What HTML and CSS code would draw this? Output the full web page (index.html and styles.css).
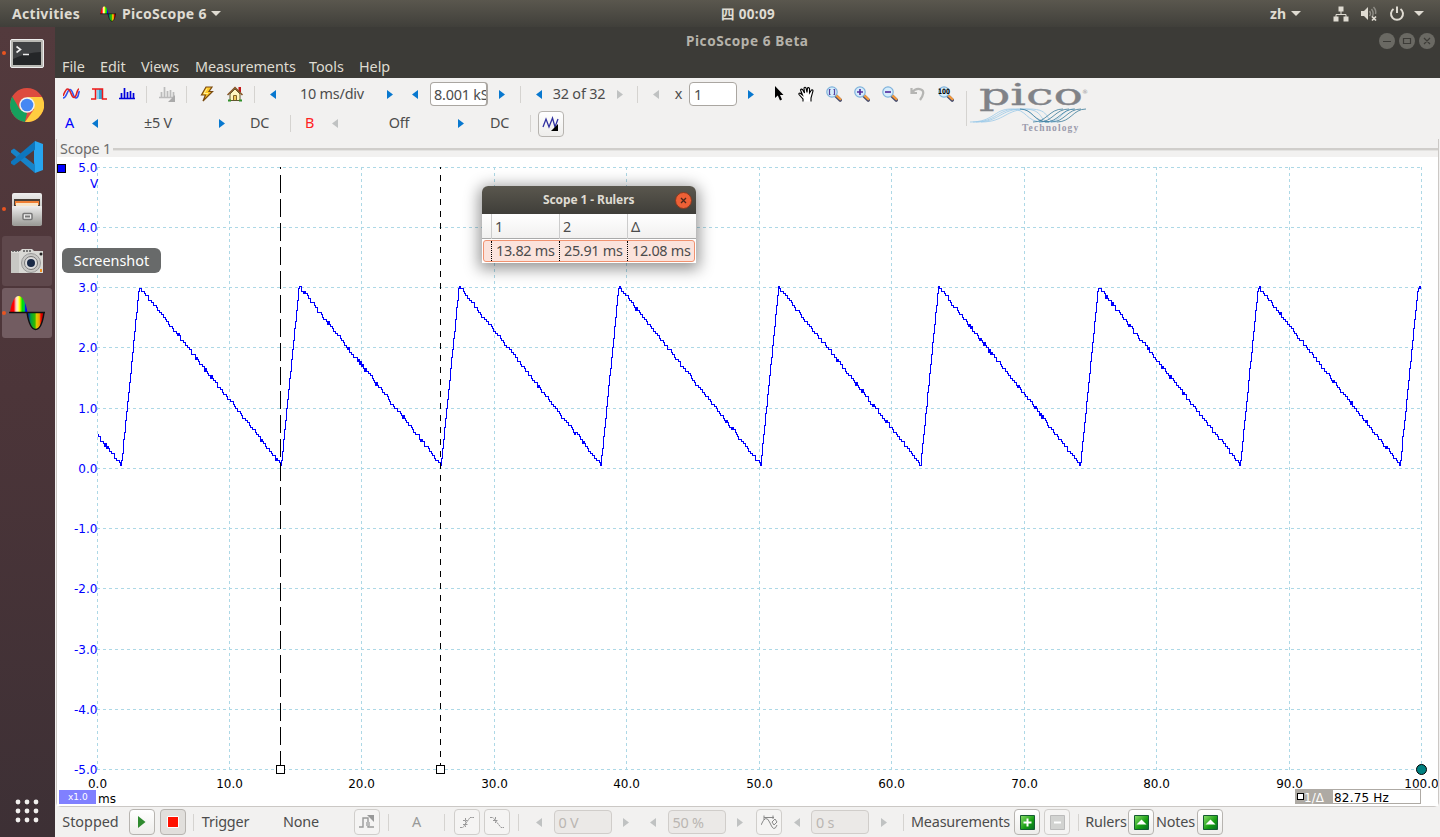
FILE: index.html
```html
<!DOCTYPE html>
<html lang="en">
<head>
<meta charset="utf-8">
<title>PicoScope 6 Beta</title>
<link rel="stylesheet" href="styles.css">
</head>
<body>
<svg class="defs" width="0" height="0">
  <symbol id="left" viewBox="0 0 6 9"><path d="M6 0V9L0 4.5Z" fill="currentColor"/></symbol>
  <symbol id="right" viewBox="0 0 6 9"><path d="M0 0V9L6 4.5Z" fill="currentColor"/></symbol>
  <symbol id="lens" viewBox="0 0 16 16">
    <path d="M9.5 9.5L14.2 14" stroke="#4a5070" stroke-width="3.6" stroke-linecap="round"/>
    <path d="M10.5 9.6L14.4 13.2" stroke="#f59a3c" stroke-width="2.2" stroke-linecap="round"/>
    <circle cx="6" cy="6" r="5.2" fill="#d6edfb" stroke="#7fb2dc" stroke-width="1.2"/>
  </symbol>
  <symbol id="spectrum" viewBox="0 0 16 12"><path d="M0 10.5H16M2.5 10V5M5.5 10V0M8.500 10V4M11.500 10V3M14.500 10V5" stroke="currentColor" stroke-width="1.700" fill="none"/></symbol>
  <linearGradient id="rainbow"><stop offset="0" stop-color="#e00"/><stop offset=".22" stop-color="#f00"/><stop offset=".34" stop-color="#fcc"/><stop offset=".45" stop-color="#ffa"/><stop offset=".55" stop-color="#ff0"/><stop offset=".7" stop-color="#0d0"/><stop offset=".82" stop-color="#0c4"/><stop offset=".9" stop-color="#00f"/></linearGradient>
  <linearGradient id="rainbow2"><stop offset="0" stop-color="#00c"/><stop offset=".2" stop-color="#00a040"/><stop offset=".45" stop-color="#3b0"/><stop offset=".55" stop-color="#dc0"/><stop offset=".72" stop-color="#e90"/><stop offset=".82" stop-color="#e00"/><stop offset="1" stop-color="#a00"/></linearGradient>
  <symbol id="pico" viewBox="0 0 36 36"><path d="M1 17.5C4 -4.500 15 -4.500 18.500 17.500Z" fill="url(#rainbow)"/><path d="M18.500 17.500C21 40 32 40 35 17.500Z" fill="url(#rainbow2)"/><path d="M0 17.500H36M18 17.500C21.500 40 32 40 35 17.500" fill="none" stroke="#111" stroke-width="1.500"/></symbol>
  <linearGradient id="green" x2="1" y2="1"><stop offset="0" stop-color="#8cdf6a"/><stop offset=".6" stop-color="#129b10"/><stop offset="1" stop-color="#086c28"/></linearGradient>
  <linearGradient id="metal" x2="0" y2="1"><stop offset="0" stop-color="#eee"/><stop offset="1" stop-color="#9c9c98"/></linearGradient>
</svg>

<header class="topbar">
  <span class="activities">Activities</span>
  <svg class="app-icon" width="16" height="16"><use href="#pico"/></svg>
  <span class="app-name">PicoScope 6</span><i class="caret"></i>
  <span class="clock">四 00:09</span>
  <div class="tray">
    <span class="lang">zh</span><i class="caret"></i>
    <svg class="net" width="16" height="16" fill="#dfdbd2"><path d="M5.500 0.500h5v5h-5zM0.500 10.500h5v5h-5zM10.500 10.500h5v5h-5z"/><path d="M8 5v3.500M3 11V8.500H13V11" fill="none" stroke="#dfdbd2"/></svg>
    <svg class="vol" width="18" height="16"><path d="M1 5h3l4-4v13l-4-4H1z" fill="#dfdbd2"/><path d="M9.500 5q2 2.500 0 5M11.500 3q3 4 0.500 8M13.500 1q3 3 2 7" fill="none" stroke="#8d8b84" stroke-width="1.500"/><path d="M12 10.500l4 4m0-4l-4 4" stroke="#dfdbd2" stroke-width="1.700"/></svg>
    <svg class="power" width="16" height="16" fill="none" stroke="#dfdbd2" stroke-width="2"><path d="M4.500 3A6 6 0 1 0 11.500 3M8 0.500V7"/></svg>
    <i class="caret"></i>
  </div>
</header>

<div class="desktop">
<nav class="dock">
  <div class="dock-item running"><svg width="34" height="29"><rect x=".5" y=".5" width="33" height="28" rx="1.500" fill="#babab5" stroke="#eee"/><rect x="3" y="3" width="28" height="23" fill="#242628"/><path d="M3 3H31V13Q18 13 3 20Z" fill="#404244"/><path d="M6.500 7.500l4 3-4 3M13 15.500h6" stroke="#eee" stroke-width="1.600" fill="none"/></svg></div>
  <div class="dock-item"><svg width="34" height="34" viewBox="0 0 34 34"><circle cx="17" cy="17" r="17" fill="#dd4b3e"/><path d="M2.300 8.500L9.600 21.200 17 25 15 33.900A17 17 0 0 1 2.300 8.500Z" fill="#16a05d"/><path d="M17 9H32A17 17 0 0 1 15 33.900L24.200 21Z" fill="#ffcd40"/><circle cx="17" cy="17" r="7.800" fill="#f3f3f0"/><circle cx="17" cy="17" r="6.300" fill="#4587f3"/></svg></div>
  <div class="dock-item"><svg width="32" height="32" viewBox="0 0 32 32"><path d="M24 0L32 3V29L24 32 23 20V10Z" fill="#27a5ef"/><path d="M0 9.500L3 7.500 24 24V32L0 11.500Z" fill="#1683c9"/><path d="M0 20.500L24 0V8.500L3 24.500 0 22.500Z" fill="#0e76bd"/></svg></div>
  <div class="dock-item running"><svg width="32" height="33"><rect x="1" y="0" width="30" height="33" rx="2" fill="url(#metal)"/><rect x="3" y="6" width="26" height="8" fill="#4a4038"/><path d="M4 8H28V12H4z" fill="#ef7f35"/><path d="M5 10H27V14H5z" fill="#f8e5c8"/><rect x="1" y="13" width="30" height="19" rx="1" fill="url(#metal)"/><rect x="12" y="20.500" width="9" height="6" rx="1" fill="#eee" stroke="#777" stroke-width="1.500"/><path d="M14 23.500h5" stroke="#777" stroke-width="2"/></svg></div>
  <div class="dock-item open"><svg width="34" height="25"><path d="M1 2H10L12 0H22L24 2H33V24H1z" fill="#d9d9d5"/><path d="M1 4H9V24H1z" fill="#c8c8c4"/><path d="M2 2h7M13 2h9" stroke="#555" stroke-width="1.500" stroke-dasharray="2 1"/><circle cx="21" cy="14" r="9.500" fill="#c8c8c5" stroke="#999"/><circle cx="21" cy="14" r="6.500" fill="#ddd" stroke="#777"/><circle cx="21" cy="14" r="4" fill="#1a2a46"/><circle cx="31" cy="5" r="1.500" fill="#222"/><path d="M30 20h2v3h-2z" fill="#f09020"/></svg></div>
  <div class="dock-item running focused"><svg width="36" height="36"><use href="#pico"/></svg></div>
  <svg class="apps-grid" width="24" height="24" fill="#f2f0ee"><circle cx="3" cy="3" r="2.400"/><circle cx="12" cy="3" r="2.400"/><circle cx="21" cy="3" r="2.400"/><circle cx="3" cy="12" r="2.400"/><circle cx="12" cy="12" r="2.400"/><circle cx="21" cy="12" r="2.400"/><circle cx="3" cy="21" r="2.400"/><circle cx="12" cy="21" r="2.400"/><circle cx="21" cy="21" r="2.400"/></svg>
</nav>

<main class="window">
  <div class="titlebar"><span>PicoScope 6 Beta</span>
    <svg class="win-buttons" width="56" height="16"><g fill="#6a6963"><circle cx="8" cy="8" r="8"/><circle cx="28" cy="8" r="8"/><circle cx="48" cy="8" r="8"/></g><path d="M4 8.500h8M24.500 5.500h7v5h-7zM45 5l6 6m0-6l-6 6" fill="none" stroke="#3c3b37" stroke-width="1.200"/></svg>
  </div>
  <div class="menubar"><span>File</span><span>Edit</span><span>Views</span><span>Measurements</span><span>Tools</span><span>Help</span></div>

  <div class="toolbar">
    <div class="tool-rows">
      <div class="row main-tools">
        <svg width="17" height="12" fill="none" stroke-width="1.600"><path d="M0 10C4 10 4 1.500 7 1.500S10 10 13 10 15 5 16.500 3" stroke="#3050f0"/><path d="M0 8C2 3 3 1 4.500 1 8 1 8 9.500 11 9.500S13.500 1 16 1" stroke="#e02020"/></svg>
        <svg width="16" height="12"><path d="M5.500 1H11V11H5.500z" fill="#8bd0ef"/><path d="M8 1H11V11H8z" fill="#38a0cf"/><path d="M0 11H4.500V1H11.500V11H16M1 1H5" fill="none" stroke="#f01818" stroke-width="1.500"/></svg>
        <svg class="navy" width="16" height="12"><use href="#spectrum"/></svg>
        <i class="sep"></i>
        <svg class="off" width="17" height="16" viewBox="0 0 17 16"><use href="#spectrum" width="16" height="12" y="1"/><path d="M16 9V16H9z" fill="#aaa"/></svg>
        <i class="sep"></i>
        <svg width="14" height="16"><path d="M6 1H12L9 5.500H12.500L3 15 5.500 9H1.500Z" fill="#ffc928" stroke="#7a4a10" stroke-width="1.200"/><path d="M7 2.500L4 7.500H8" fill="none" stroke="#fff29a"/></svg>
        <svg width="16" height="16"><path d="M11.500 1h2.500v5h-2.500z" fill="#c41818"/><path d="M3 8V14.500H13V8L8 3z" fill="#fff5c2" stroke="#61572e"/><path d="M0.500 9L8 1.500 15.500 9" fill="none" stroke="#805020" stroke-width="1.500"/><path d="M6.500 14V9.500H9.500V14" fill="#f2c95c" stroke="#80632b"/><path d="M1 14.500h3m8 0h3" stroke="#30902a" stroke-width="2"/></svg>
        <i class="sep"></i>
        <svg class="arr"><use href="#left"/></svg><span class="t-div">10 ms/div</span><svg class="arr"><use href="#right"/></svg>
        <svg class="arr"><use href="#left"/></svg><span class="field samples">8.001 kS</span><svg class="arr"><use href="#right"/></svg>
        <i class="sep"></i>
        <svg class="arr"><use href="#left"/></svg><span>32 of 32</span><svg class="arr dim"><use href="#right"/></svg>
        <i class="sep"></i>
        <svg class="arr dim"><use href="#left"/></svg><span>x</span><span class="field zoomf">1</span><svg class="arr"><use href="#right"/></svg>
        <svg width="10" height="16"><path d="M1 0V12L3.800 9.500 6 14.500 8 13.600 6 9H9.500Z"/></svg>
        <svg width="17" height="17"><path d="M5 15.500V13L1 8.500Q0.500 7 2 7L4.500 9 2.500 4Q3 2.500 4.500 3.500L6.500 7 6 2Q7 .5 8 2L9 6.500 9.500 2Q10.500 1 11.500 2.500V7L13.500 4Q15 3.500 15 5L13 12V15.500" fill="#fff" stroke="#000" stroke-width="1.100"/></svg>
        <svg width="16" height="16"><use href="#lens"/><path d="M4.500 3.500H3.500V8.500H4.500M7.500 3.500H8.500V8.500H7.500" fill="none" stroke="#5745a0" stroke-width="1.200"/></svg>
        <svg width="16" height="16"><use href="#lens"/><path d="M3 6H9M6 3V9" stroke="#5730a0" stroke-width="1.700"/></svg>
        <svg width="16" height="16"><use href="#lens"/><path d="M3 6H9" stroke="#5730a0" stroke-width="1.700"/></svg>
        <svg width="16" height="16"><path d="M1.500 2V7H7M2 6.500Q6 1.500 11 3.500T10 14" fill="none" stroke="#b5b5b3" stroke-width="2.200"/></svg>
        <svg width="16" height="16"><use href="#lens"/><text x="0" y="8" class="hundred" textLength="12" lengthAdjust="spacingAndGlyphs">100</text></svg>
      </div>
      <div class="row channel-tools">
        <span class="ch-a">A</span><svg class="arr"><use href="#left"/></svg><span>±5 V</span><svg class="arr"><use href="#right"/></svg><span>DC</span>
        <i class="sep"></i>
        <span class="ch-b">B</span><svg class="arr dim"><use href="#left"/></svg><span>Off</span><svg class="arr"><use href="#right"/></svg><span>DC</span>
        <i class="sep"></i>
        <span class="btn"><svg width="18" height="16"><path d="M1 11L4 3 7 11 10.500 2 13 11 16 3" fill="none" stroke="#3030a0" stroke-width="1.300"/><path d="M16 8V15H9z"/></svg></span>
      </div>
    </div>
    <i class="sep tall"></i>
    <svg class="logo" width="116" height="56">
      <text x="6" y="25" class="logo-pico" textLength="104" lengthAdjust="spacingAndGlyphs">pico</text>
      <text x="109" y="14" class="logo-r">®</text>
      <g fill="none" stroke-width=".8" transform="translate(0 1)"><g stroke="#9bc9e8"><path d="M0 41C24 41 24 28 44 28S58 41 74 41 88 28 101 28"/><path d="M-3 41C21 41 21 28 38 28S52 41 70 41"/><path d="M3 41C27 41 27 28 50 28S64 41 78 41"/><path d="M8 41C32 41 32 28 56 28S70 41 84 41"/></g><g stroke="#397a99"><path d="M60 41C74 41 76 28 90 28"/><path d="M66 41C80 41 82 28 96 28"/><path d="M72 41C86 41 88 28 102 28"/><path d="M78 41C92 41 94 28 108 28"/><path d="M84 41C98 41 100 28 113 28"/><path d="M47 28C60 28 60 41 76 41"/></g></g>
      <text x="49" y="51" class="logo-tech" textLength="56">Technology</text>
    </svg>
  </div>

  <section class="scope">
    <div class="scope-title"><span>Scope 1</span></div>
    <svg class="chart" id="chart" viewBox="57 157 1381 649" width="1381" height="649">
      <g id="grid"></g>
      <rect x="57.500" y="164.500" width="8" height="8" fill="#00f" stroke="#000"/>
      <g id="labels"></g>
      <text x="90" y="188" class="volt">V</text>
      <path id="wave" class="wave"/>
      <path d="M280.500 167V169M280.500 175V765" class="ruler long"/>
      <path d="M440.500 167V169M440.500 175V765" class="ruler short"/>
      <rect x="276.500" y="765.500" width="8" height="8" class="handle"/><rect x="436.500" y="765.500" width="8" height="8" class="handle"/>
      <circle cx="1421.500" cy="769.500" r="5" fill="#008080" stroke="#000"/>
      <rect x="59" y="790" width="37" height="14" fill="#8080ff"/><text x="68" y="800" class="mult">x1.0</text><text x="98" y="803" class="tick">ms</text>
      <rect x="1295.500" y="789.500" width="125" height="14" fill="#fff" stroke="#aeaaa4"/><path d="M1295 789h38v15h-38z" fill="#aeaaa4"/>
      <rect x="1297.500" y="793.500" width="6" height="6" fill="#fff" stroke="#000"/><text x="1304" y="802" class="inv">1/Δ</text><text x="1334" y="802" class="tick hz">82.75 Hz</text>
    </svg>
  </section>

  <footer class="statusbar">
    <span class="t-stop">Stopped</span>
    <span class="btn"><svg width="8" height="12"><path d="M0 0V12L7.500 6Z" fill="#2f8a2f"/></svg></span>
    <span class="btn pressed"><svg width="12" height="12"><path d="M0.500 .5h11v11h-11z" fill="#f10" stroke="#fff"/></svg></span>
    <i class="sep"></i><span>Trigger</span><span>None</span>
    <span class="btn off"><svg width="18" height="16"><path d="M1 13H5V4H10V13H16" fill="none" stroke="#999" stroke-width="1.400"/><path d="M9 1H16V8z" fill="#999"/><path d="M8 8h4v4h-4z" fill="#bbb"/></svg></span>
    <i class="sep"></i><span class="grey-a">A</span><i class="sep"></i>
    <span class="btn off"><svg width="16" height="14" fill="none" stroke="#999"><path d="M1 12.500H4L11 2.500H15M4 5.500H9M6.500 3V12M4 9.500H9" stroke-dasharray="2 .5"/></svg></span>
    <span class="btn off"><svg width="16" height="14" fill="none" stroke="#999"><path d="M1 2.500H4L12 12.500H15M4 5.500H9M6.500 2V8" stroke-dasharray="2 .5"/></svg></span>
    <i class="sep"></i>
    <svg class="arr dim"><use href="#left"/></svg><span class="field disabled">0 V</span><svg class="arr dim"><use href="#right"/></svg>
    <svg class="arr dim"><use href="#left"/></svg><span class="field disabled">50 %</span><svg class="arr dim"><use href="#right"/></svg>
    <span class="btn off"><svg width="17" height="15" fill="none" stroke="#888"><path d="M0 10Q5 -2 9 8T16 10M3 2.500H13M3 .5V5M12 .5V4M11 7l3-3 2 3-3 3z"/></svg></span>
    <svg class="arr dim"><use href="#left"/></svg><span class="field disabled">0 s</span><svg class="arr dim"><use href="#right"/></svg>
    <i class="sep"></i><span class="t-meas">Measurements</span>
    <span class="btn"><svg width="15" height="15"><path d="M.5 .5h14v14H.5z" fill="url(#green)" stroke="#145b32"/><path d="M3.500 7.500h8M7.500 3.500v8" stroke="#fff" stroke-width="2"/></svg></span>
    <span class="btn off"><svg width="15" height="15"><path d="M.5 .5h14v14H.5z" fill="#d2d3d1" stroke="#bbb"/><path d="M4 7.500h7" stroke="#fff" stroke-width="2"/></svg></span>
    <i class="sep"></i><span>Rulers</span>
    <span class="btn"><svg width="15" height="15"><path d="M.5 .5h14v14H.5z" fill="url(#green)" stroke="#145b32"/><path d="M2.500 9.500h10l-5-5z" fill="#fff"/></svg></span>
    <span>Notes</span>
    <span class="btn"><svg width="15" height="15"><path d="M.5 .5h14v14H.5z" fill="url(#green)" stroke="#145b32"/><path d="M2.500 9.500h10l-5-5z" fill="#fff"/></svg></span>
  </footer>
</main>
</div>

<div class="tooltip">Screenshot</div>
<div class="dialog">
  <div class="dialog-title"><span>Scope 1 - Rulers</span><svg width="17" height="17"><circle cx="8.500" cy="8.500" r="8" fill="#ee6036" stroke="#87391f"/><path d="M6 6l5 5m0-5l-5 5" stroke="#4a261a" stroke-width="1.300"/></svg></div>
  <div class="dialog-row head"><i></i><span>1</span><span>2</span><span>Δ</span></div>
  <div class="dialog-row values"><i></i><span>13.82 ms</span><span>25.91 ms</span><span>12.08 ms</span></div>
</div>
<script src="chart.js"></script>
</body>
</html>
```
FILE: styles.css
```css
* { box-sizing: border-box; }
body { margin: 0; width: 1440px; height: 837px; overflow: hidden; background: #f2f1f0; color: #4c4c4c; font: 14.4px/20px "Noto Sans", "Noto Sans CJK SC", sans-serif; white-space: nowrap; letter-spacing: -.2px; }
svg { display: block; flex: none; }
.defs { position: absolute; }

.topbar { height: 27px; display: flex; align-items: center; padding-left: 12px; background: linear-gradient(#5a574e, #403f3a); color: #dfdbd2; font-weight: bold; font-size: 14px; letter-spacing: .3px; }
.activities { width: 88px; }
.app-icon { margin-right: 6px; }
.app-name { width: 89px; }
.caret { border: 5px solid transparent; border-top: 5px solid #dfdbd2; border-bottom: 0; }
.clock { margin-left: 500px; width: 55px; font-size: 13.5px; letter-spacing: .35px; padding-top: 1px; }
.tray { display: flex; align-items: center; margin-left: 494px; }
.lang { width: 21px; letter-spacing: 0; }
.net { margin-left: 32px; }
.vol { margin-left: 11px; }
.power { margin: 0 9px 0 11px; }

.desktop { display: flex; height: 810px; }
.dock { width: 55px; flex: none; display: flex; flex-direction: column; align-items: center; gap: 2px; padding: 1px 1px 14px 0; background: linear-gradient(#533a3d, #4c3539 45%, #3d3035); }
.dock-item { width: 50px; height: 50px; display: grid; place-items: center; border-radius: 3px; position: relative; }
.running::before { content: ""; position: absolute; left: 0; top: 23px; width: 4px; height: 4px; border-radius: 2px; background: #e95420; }
.open { background: #5f484c; }
.focused { background: #725c61; }
.apps-grid { margin-top: auto; }

.window { flex: 1; display: flex; flex-direction: column; }
.titlebar { height: 28px; background: #3c3b37; color: #b5b2aa; display: flex; align-items: center; padding-left: 631px; font-weight: bold; font-size: 13.6px; letter-spacing: .55px; }
.titlebar span { width: 693px; }
.menubar { height: 23px; background: #3c3b37; color: #dfdbd2; display: grid; grid-template-columns: 38px 41px 54px 114px 50px 40px; padding-left: 7px; line-height: 23px; letter-spacing: -.05px; }

.toolbar { height: 61px; display: flex; }
.tool-rows { width: 909px; }
.row { display: grid; justify-items: center; align-items: center; padding-left: 2px; }
.main-tools { height: 32px; grid-template-columns: 28px 28px 28px 10px 32px 6px 36px 20px 18px 20px 98px 18px 31px 58px 28px 8px 29px 52px 29px 6px 31px 15px 54px 22px 34px 20px 36px 20px 36px 20px 36px; }
.channel-tools { height: 27px; grid-template-columns: 25px 25px 102px 26px 49px 12px 27px 23px 106px 18px 59px 3px 38px; }
.channel-tools > span:not(.btn) { margin-top: -2px; }
.sep { width: 1px; height: 17px; background: #d5d3d0; }
.tall { height: 35px; margin: 13px 0 0 2px; }
.arr { width: 6px; height: 9px; color: #0878cf; }
.channel-tools > .arr { margin-top: -1px; }
.dim { color: #c0c2c2; }
.navy { color: #0000dc; }
.off { color: #bbb; }
.field { height: 24px; border: 1px solid #aaa6a1; border-radius: 4px; background: #fff; padding-left: 4px; overflow: hidden; line-height: 24px; }
.samples { width: 58px; padding-left: 3px; letter-spacing: -.2px; border-right-width: 2px; }
.zoomf { width: 48px; }
.ch-a { color: #00f; }
.ch-b { color: #f22; }
.btn { width: 26px; height: 26px; display: grid; place-items: center; border: 1px solid #b7b4b0; border-radius: 4px; background: linear-gradient(#fff, #eeedeb); }
.pressed { background: #e1dfdc; }
.btn.off { border-color: #d0cecb; background: #f5f4f3; }
.hundred { font: bold 7.5px "DejaVu Sans", sans-serif; letter-spacing: 0; }
.logo { margin-left: 6px; overflow: visible; margin-top: 2px; }
.logo-pico { font: 30px "DejaVu Serif", serif; fill: #808287; letter-spacing: 0; stroke: #808287; stroke-width: .3px; }
.logo-r { font: 6px "DejaVu Sans", sans-serif; fill: #999; }
.logo-tech { font: bold 9.5px "Liberation Serif", serif; fill: #9b9bac; }

.scope { height: 668px; border: 1px solid #cbc8c5; border-top: 0; border-radius: 0 0 5px 5px; margin: 0 1px; }
.scope-title { height: 18px; display: flex; align-items: center; padding-left: 3px; color: #6c6c6c; gap: 2px; line-height: 18px; }
.scope-title span { padding-top: 2px; }
.scope-title::after { content: ""; flex: 1; height: 2px; margin-top: 3px; background: #d0cecb; border-bottom: 1px solid #e4e3e1; }
.chart { background: #fff; }
.grid { stroke: #add8e6; stroke-dasharray: 3 3; shape-rendering: crispEdges; }
.tick { font: 12px "DejaVu Sans", sans-serif; letter-spacing: 0; }
.hz { letter-spacing: .2px; }
.volt { font: 12px "DejaVu Sans", sans-serif; fill: #00f; }
.mult { font: 9px "DejaVu Sans", sans-serif; fill: #fff; letter-spacing: 0; }
.inv { font: 12px "DejaVu Sans", sans-serif; fill: #fff; letter-spacing: 0; }
.wave { fill: none; stroke: #00f; shape-rendering: crispEdges; }
.ruler { stroke: #000; fill: none; shape-rendering: crispEdges; }
.long { stroke-dasharray: 18 6; }
.short { stroke-dasharray: 6 6; }
.handle { fill: #fff; stroke: #000; }

.statusbar { height: 30px; display: grid; justify-items: center; align-items: center; padding-left: 2px; grid-template-columns: 67px 36px 25px 16px 49px 102px 30px 12px 45px 10px 36px 24px 18px 23px 65px 22px 31px 57px 29px 30px 25px 62px 25px 14px 101px 32px 28px 14px 42px 28px 41px 28px; }
.t-stop { letter-spacing: 0; }
.disabled { width: 58px; color: #bab6b2; border-color: #d0cdca; background: #ebe9e7; }
.grey-a { color: #999; }

.tooltip { position: absolute; left: 62px; top: 248px; width: 99px; height: 25px; border-radius: 6px; background: #686a6a; color: #fff; text-align: center; line-height: 25px; letter-spacing: 0; }
.dialog { position: absolute; left: 482px; top: 186px; width: 214px; height: 77px; border-radius: 6px 6px 0 0; background: #fff; box-shadow: 0 3px 15px 3px rgba(0,0,0,.42); }
.dialog-title { height: 28px; display: flex; align-items: center; padding-left: 61px; border-radius: 6px 6px 0 0; background: linear-gradient(#5a574e, #3f3e39); color: #dfdbd2; font-weight: bold; font-size: 12px; letter-spacing: -.1px; }
.dialog-title span { width: 132px; }
.dialog-row { display: grid; grid-template-columns: 9px 68px 68px 1fr; }
.head { height: 25px; line-height: 25px; background: linear-gradient(#fff, #f1f0ef); border-bottom: 1px solid #aaa; }
.head span { border-left: 1px solid #ccc; padding-left: 3px; }
.values { height: 22px; margin: 1px; grid-template-columns: 7px 68px 68px 1fr; line-height: 19px; background: #fbe3dc; border: 1px solid #f09270; border-radius: 3px; }
.values span { border-left: 1px dotted #000; padding-left: 4px; letter-spacing: -.3px; }
```
FILE: chart.js
```js
const NS = "http://www.w3.org/2000/svg";
function add(parent, tag, attrs, text) {
  const el = document.createElementNS(NS, tag);
  for (const k in attrs) el.setAttribute(k, attrs[k]);
  if (text) el.textContent = text;
  document.getElementById(parent).appendChild(el);
}
for (let i = 0; i <= 10; i++) {
  const x = Math.floor(97 + i * 132.45) + 0.5;
  const y = Math.floor(167 + i * 60.25) + 0.5;
  add("grid", "path", { class: "grid", d: `M97 ${y}H1421` });
  add("grid", "path", { class: "grid", d: `M${x} 167V770` });
  add("labels", "text", { class: "tick", x: 97.4, y: y + 4.5, "text-anchor": "end", fill: "#00f" }, (5 - i).toFixed(1));
  add("labels", "text", { class: "tick", x: x, y: 788, "text-anchor": "middle" }, (i * 10).toFixed(1));
}
// Sawtooth of 12.08 ms period, quantised to 8-bit vertical steps.
const period = 159.85, peak = 138.5, fall = 142;
function level(x) {
  const p = (((x - peak) % period) + period) % period;
  return p < fall ? 286 + 178.5 * p / fall : 464.5 - 178.5 * (p - fall) / (period - fall);
}
let d = "";
let seed = 7;
for (let x = 97; x <= 1420; x++) {
  seed = (seed * 1103515245 + 12345) % 2147483648;
  const noise = (seed / 2147483648 - 0.5) * 3;
  const y = Math.round(Math.min(465, Math.max(286, Math.round((level(x) + noise - 286) / 2.35) * 2.35 + 286))) + 0.5;
  d += d ? `H${x + 0.5}V${y}` : `M${x + 0.5} ${y}`;
}
document.getElementById("wave").setAttribute("d", d);
```
